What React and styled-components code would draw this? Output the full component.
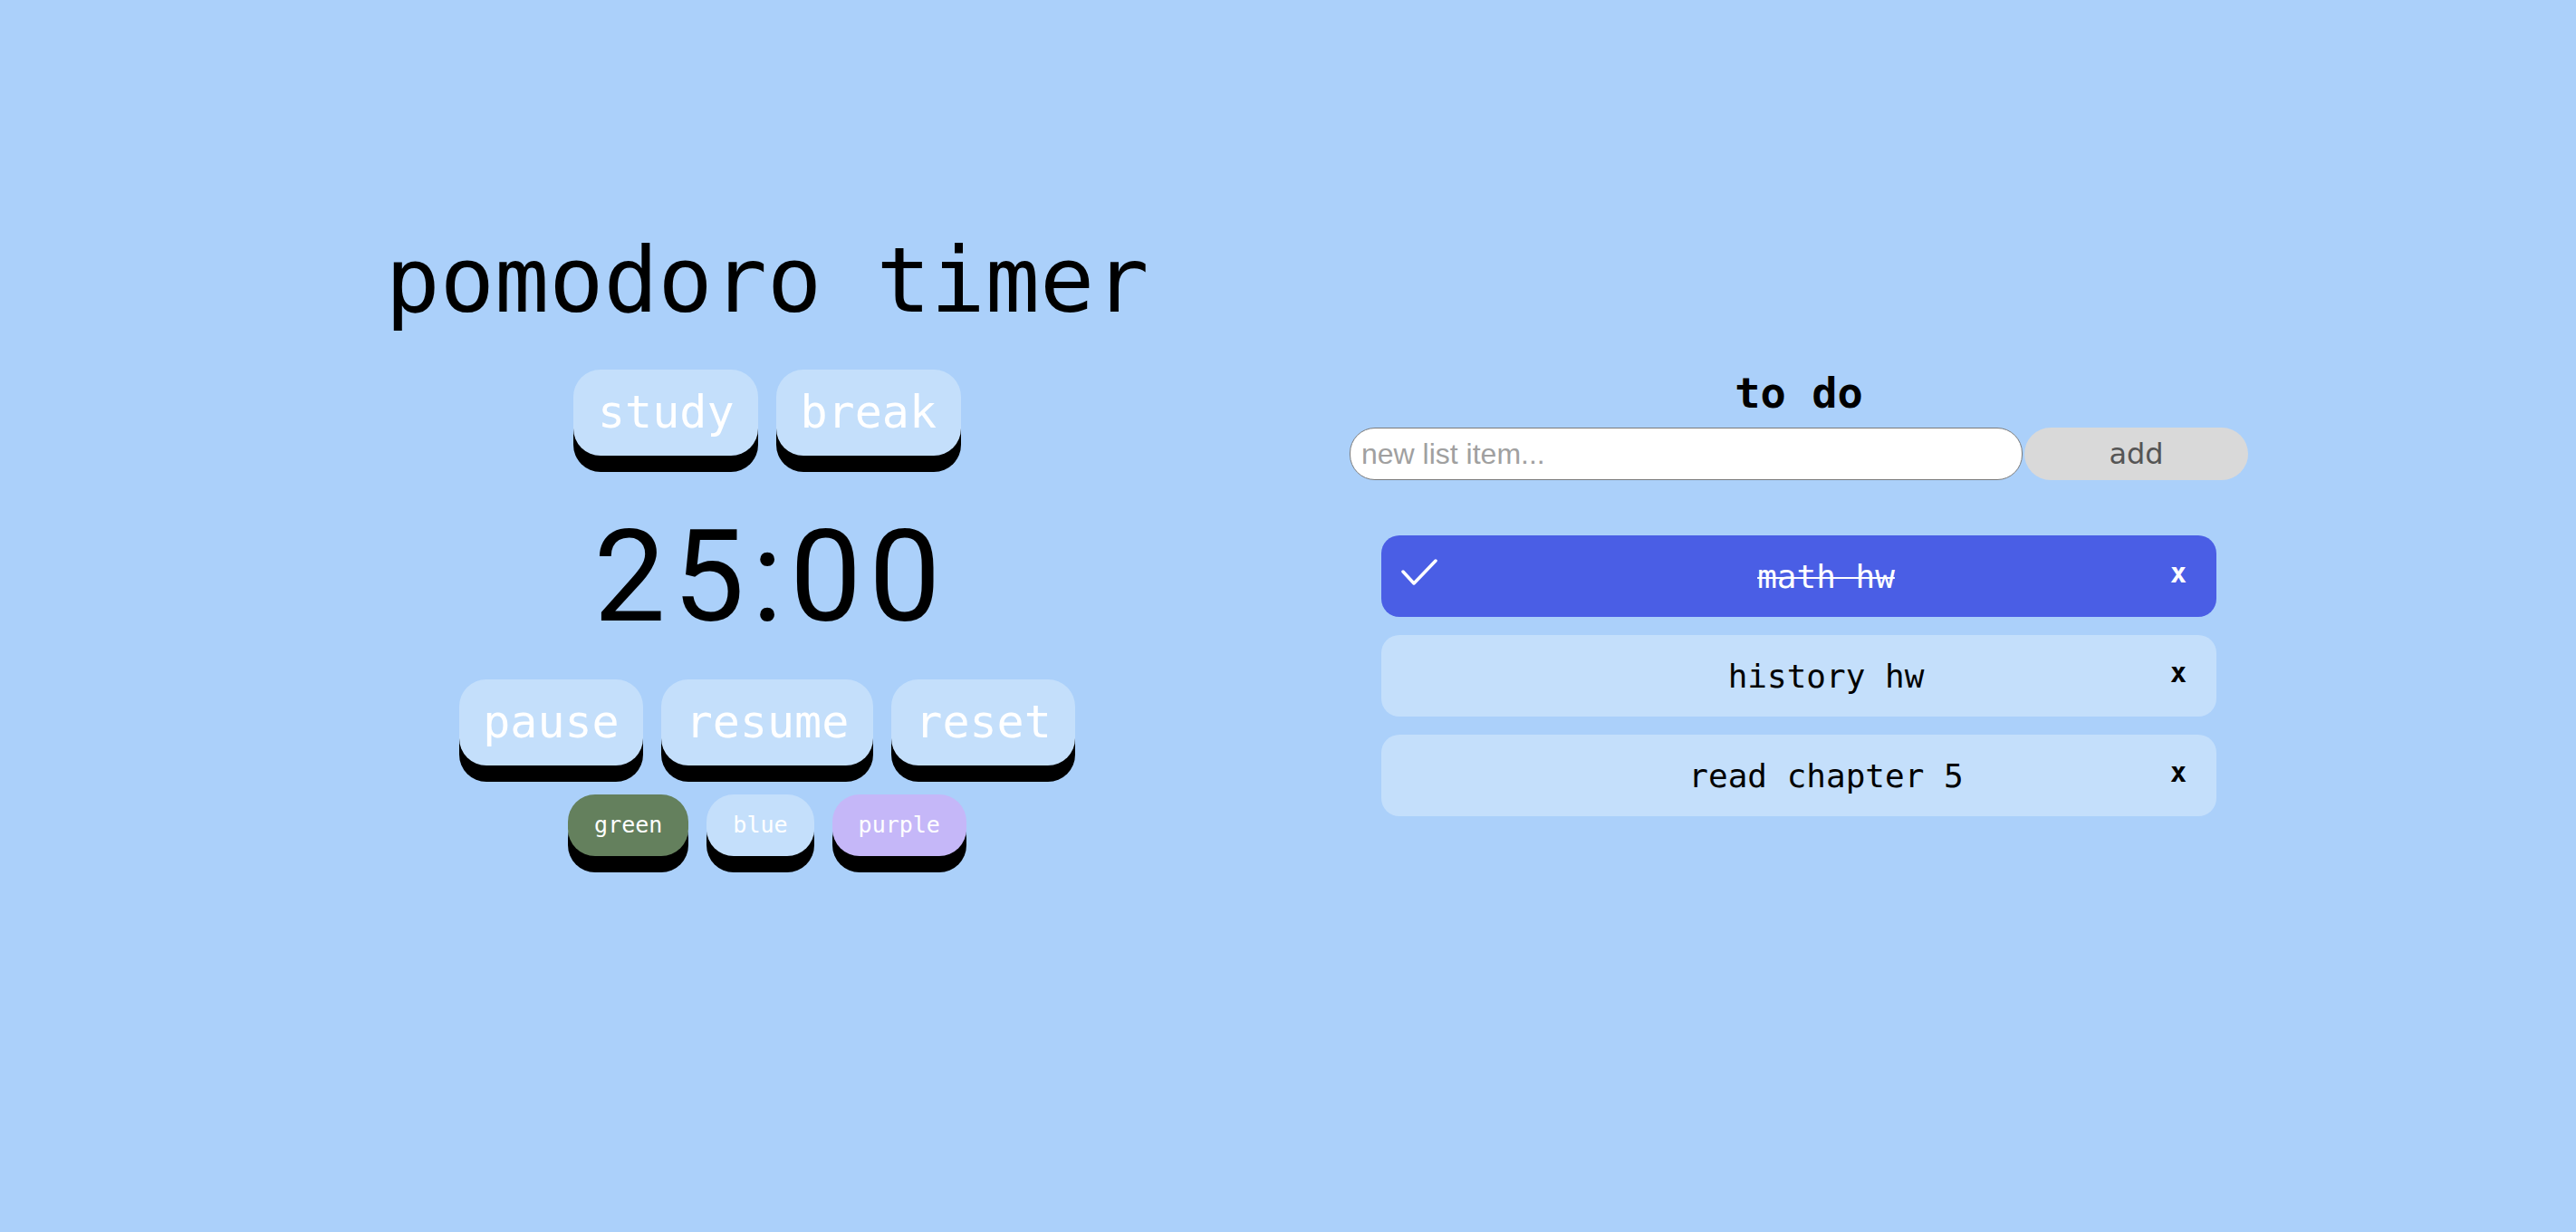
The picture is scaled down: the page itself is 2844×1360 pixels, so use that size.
import React, { useState } from "react";
import styled, { createGlobalStyle, css } from "styled-components";

const GlobalStyle = createGlobalStyle`
  body {
    margin: 0;
    background: #abd0fa;
    font-family: "DejaVu Sans Mono", monospace;
  }
`;

const Page = styled.div`
  display: flex;
  align-items: flex-start;
  gap: 143px;
  min-height: 100vh;
  padding: 252px 0 0 347px;
  box-sizing: border-box;
`;

const TimerColumn = styled.section`
  width: 1000px;
  display: flex;
  flex-direction: column;
  align-items: center;
`;

const Title = styled.h1`
  margin: 0;
  font-size: 100px;
  font-weight: normal;
  line-height: 116px;
  color: #000;
`;

const KeyRow = styled.div`
  display: flex;
  gap: 20px;
  margin-top: ${(p) => p.$top}px;
`;

const keyBase = css`
  border: none;
  color: #fff;
  font-family: "DejaVu Sans Mono", monospace;
  background: ${(p) => p.$bg || "#c4dffb"};
  box-shadow: 0 18px 0 0 #000;
  cursor: pointer;
`;

const BigKey = styled.button`
  ${keyBase}
  font-size: 50px;
  line-height: 59px;
  padding: 18px 26.5px;
  border-radius: 30px;
`;

const SwatchKey = styled.button`
  ${keyBase}
  font-size: 25px;
  font-weight: normal;
  line-height: 30px;
  padding: 19px 29px;
  border-radius: 30px;
`;

const Clock = styled.div`
  margin-top: 51px;
  font-family: Roboto, "DejaVu Sans", sans-serif;
  font-size: 141px;
  line-height: 165px;
  letter-spacing: 8px;
  padding-left: 8px;
  color: #000;
`;

const TodoColumn = styled.section`
  width: 992px;
  margin-top: 154px;
  display: flex;
  flex-direction: column;
`;

const Heading = styled.h2`
  margin: 0;
  text-align: center;
  font-size: 47px;
  font-weight: bold;
  line-height: 55px;
`;

const InputRow = styled.form`
  display: flex;
  align-items: center;
  gap: 2px;
  margin-top: 11px;
`;

const TextInput = styled.input`
  width: 743px;
  height: 58px;
  box-sizing: border-box;
  border: 1.5px solid #7a7a7a;
  border-radius: 28px;
  padding: 0 12px;
  background: #fff;
  font-family: "Liberation Sans", Arial, sans-serif;
  font-size: 32px;
  outline: none;

  &::placeholder {
    color: #a0a0a0;
  }
`;

const AddButton = styled.button`
  width: 247px;
  height: 58px;
  border: none;
  border-radius: 29px;
  background: #d9d9d9;
  color: #555;
  font-family: "DejaVu Sans", sans-serif;
  font-size: 32px;
  cursor: pointer;
`;

const List = styled.ul`
  list-style: none;
  margin: 61px 0 0;
  padding: 0 35px;
  display: flex;
  flex-direction: column;
  gap: 20px;
`;

const Item = styled.li`
  height: 90px;
  border-radius: 20px;
  background: ${(p) => (p.$done ? "#4a5ee5" : "#c4dffb")};
  color: ${(p) => (p.$done ? "#fff" : "#000")};
  display: grid;
  grid-template-columns: 100px 1fr 40px;
  align-items: center;
  padding: 0 22px;
  cursor: pointer;
`;

const CheckBox = styled.div`
  display: flex;
  align-items: center;
  height: 40px;
  margin-top: -8px;
`;

const ItemText = styled.span`
  font-size: 36px;
  text-align: center;
  text-decoration: ${(p) => (p.$done ? "line-through" : "none")};
  text-decoration-thickness: 2px;
`;

const RemoveButton = styled.button`
  border: none;
  background: none;
  padding: 0;
  color: inherit;
  font-family: "DejaVu Sans Mono", monospace;
  font-weight: bold;
  font-size: 30px;
  line-height: 30px;
  margin-top: -6px;
  cursor: pointer;
`;

const Check = () => (
  <svg width="40" height="30" viewBox="0 0 40 30" fill="none">
    <path
      d="M2 14 L14 27 L38 2"
      stroke="#fff"
      strokeWidth="3.5"
      strokeLinecap="round"
      strokeLinejoin="round"
    />
  </svg>
);

const themes = [
  { name: "green", bg: "#64805d" },
  { name: "blue", bg: "#c4dffb" },
  { name: "purple", bg: "#c5b7f8" },
];

export default function App() {
  const [todos, setTodos] = useState([
    { id: 1, text: "math hw", done: true },
    { id: 2, text: "history hw", done: false },
    { id: 3, text: "read chapter 5", done: false },
  ]);
  const [draft, setDraft] = useState("");

  const addTodo = (e) => {
    e.preventDefault();
    if (!draft.trim()) return;
    setTodos([...todos, { id: Date.now(), text: draft, done: false }]);
    setDraft("");
  };

  const toggle = (id) =>
    setTodos(todos.map((t) => (t.id === id ? { ...t, done: !t.done } : t)));

  const remove = (id) => setTodos(todos.filter((t) => t.id !== id));

  return (
    <>
      <GlobalStyle />
      <Page>
        <TimerColumn>
          <Title>pomodoro timer</Title>
          <KeyRow $top={40}>
            <BigKey>study</BigKey>
            <BigKey>break</BigKey>
          </KeyRow>
          <Clock>25:00</Clock>
          <KeyRow $top={31}>
            <BigKey>pause</BigKey>
            <BigKey>resume</BigKey>
            <BigKey>reset</BigKey>
          </KeyRow>
          <KeyRow $top={32}>
            {themes.map((t) => (
              <SwatchKey key={t.name} $bg={t.bg}>
                {t.name}
              </SwatchKey>
            ))}
          </KeyRow>
        </TimerColumn>

        <TodoColumn>
          <Heading>to do</Heading>
          <InputRow onSubmit={addTodo}>
            <TextInput
              placeholder="new list item..."
              value={draft}
              onChange={(e) => setDraft(e.target.value)}
            />
            <AddButton type="submit">add</AddButton>
          </InputRow>
          <List>
            {todos.map((t) => (
              <Item key={t.id} $done={t.done} onClick={() => toggle(t.id)}>
                <CheckBox>{t.done && <Check />}</CheckBox>
                <ItemText $done={t.done}>{t.text}</ItemText>
                <RemoveButton
                  onClick={(e) => {
                    e.stopPropagation();
                    remove(t.id);
                  }}
                >
                  x
                </RemoveButton>
              </Item>
            ))}
          </List>
        </TodoColumn>
      </Page>
    </>
  );
}
